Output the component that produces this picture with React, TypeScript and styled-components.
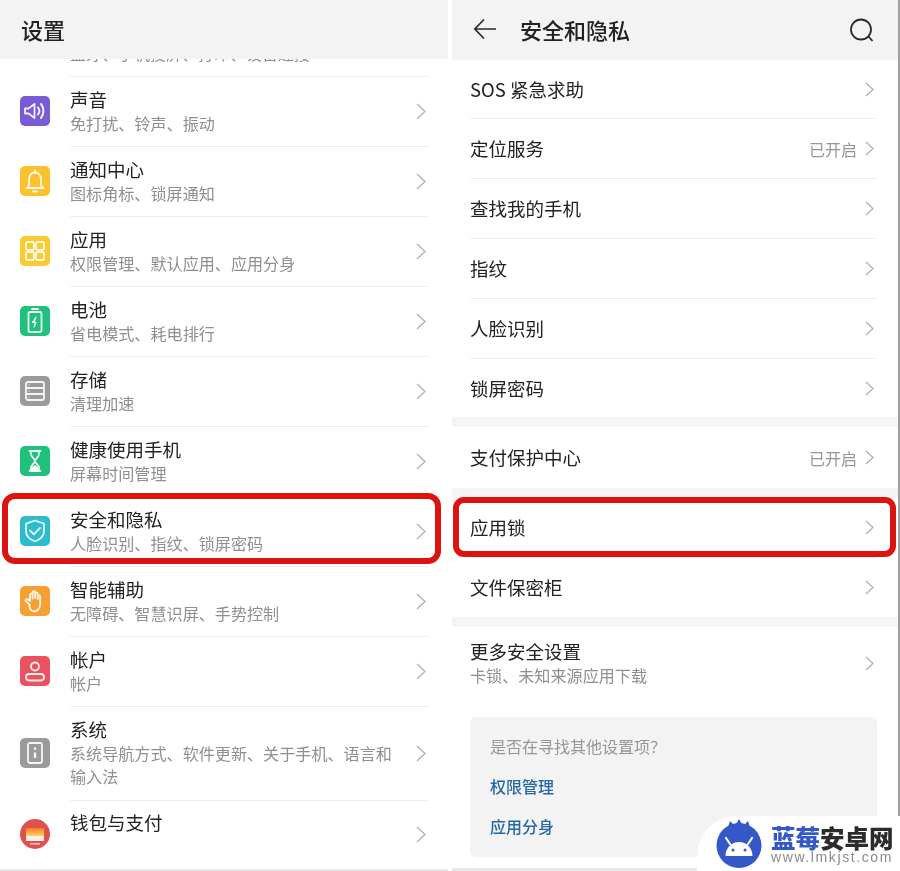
import React from 'react';
import styled, { createGlobalStyle } from 'styled-components';

const GlobalStyle = createGlobalStyle`
  html, body {
    margin: 0;
    background: #fff;
    font-family: "Noto Sans CJK SC", "Liberation Sans", sans-serif;
  }
`;

const Page = styled.div`
  position: relative;
  display: grid;
  grid-template-columns: 448px 1fr;
  column-gap: 4px;
  width: 900px;
  height: 871px;
  overflow: hidden;
  background: #fff;
  filter: blur(0.35px);
`;

const Panel = styled.section<{ $edge?: boolean }>`
  display: flex;
  flex-direction: column;
  height: 871px;
  background: #fff;
  border-right: ${(p) => (p.$edge ? '2px solid #a0a0a0' : 'none')};
`;

const Header = styled.header<{ $height: number }>`
  display: flex;
  align-items: center;
  flex: none;
  box-sizing: border-box;
  height: ${(p) => p.$height}px;
  padding: 0 21px 2px;
  background: #f3f3f3;
  color: #222;
  font-size: 22px;
  font-weight: 500;
  line-height: 30px;
`;

const BackButton = styled.span`
  display: flex;
  margin-right: 24px;
`;

const SearchButton = styled.span`
  display: flex;
  margin-left: auto;
  margin-right: 3px;
`;

const ClippedRow = styled.div`
  display: flex;
  flex-direction: column;
  justify-content: flex-end;
  flex: none;
  height: 17px;
  margin: 0 20px 0 70px;
  overflow: hidden;
  border-bottom: 1px solid #efefef;
`;

const ClippedText = styled.div`
  flex: none;
  padding-bottom: 11px;
  color: #8f8f8f;
  font-size: 16px;
  line-height: 23px;
  white-space: nowrap;
`;

const MenuRow = styled.div<{ $highlight?: boolean }>`
  position: relative;
  display: flex;
  align-items: stretch;
  flex: none;
  padding-left: 20px;
  background: #fff;

  ${(p) =>
    p.$highlight &&
    `
    &::after {
      content: '';
      position: absolute;
      top: -4px;
      left: 2px;
      width: 439px;
      height: 71px;
      box-sizing: border-box;
      border: 6px solid #dc1410;
      border-radius: 13px;
    }
  `}
`;

const IconSlot = styled.div`
  display: flex;
  align-items: center;
  flex: none;
  width: 50px;
  padding-bottom: 2px;
`;

const IconTile = styled.div<{ $color: string; $round?: boolean }>`
  display: flex;
  align-items: center;
  justify-content: center;
  width: 30px;
  height: 30px;
  border-radius: ${(p) => (p.$round ? '50%' : '5px')};
  background: ${(p) => p.$color};
  overflow: hidden;
`;

const MenuBody = styled.div<{ $divider?: boolean; $height?: number }>`
  display: flex;
  align-items: center;
  flex: 1;
  box-sizing: border-box;
  min-height: ${(p) => p.$height ?? 70}px;
  margin-right: 20px;
  border-bottom: ${(p) => (p.$divider ? '1px solid #efefef' : 'none')};
`;

const TextBlock = styled.div<{ $lift?: boolean }>`
  flex: 1;
  min-width: 0;
  padding: 0 14px ${(p) => (p.$lift ? 2 : 0)}px 0;
`;

const Title = styled.div`
  color: #222;
  font-size: 18.5px;
  line-height: 23px;
  white-space: nowrap;
`;

const Sub = styled.div`
  margin-top: 1px;
  color: #8f8f8f;
  font-size: 16.1px;
  line-height: 23px;
`;

const ChevronSlot = styled.span`
  display: flex;
  flex: none;
  margin: 0 2px 1px 0;
`;

const SettingRow = styled.div<{ $divider?: boolean; $highlight?: boolean; $height?: number }>`
  position: relative;
  display: flex;
  align-items: center;
  flex: none;
  box-sizing: border-box;
  height: ${(p) => p.$height ?? 60}px;
  margin: 0 21px 0 18px;
  padding-right: 3px;
  border-bottom: ${(p) => (p.$divider ? '1px solid #efefef' : 'none')};

  ${(p) =>
    p.$highlight &&
    `
    &::after {
      content: '';
      position: absolute;
      top: -1px;
      left: -17px;
      width: 443px;
      height: 60px;
      box-sizing: border-box;
      border: 6px solid #dc1410;
      border-radius: 11px;
    }
  `}
`;

const Value = styled.span`
  margin-right: 8px;
  color: #959595;
  font-size: 16px;
`;

const SectionGap = styled.div`
  flex: none;
  height: 10px;
  background: #f5f5f5;
`;

const HintCard = styled.div`
  display: flex;
  flex-direction: column;
  flex: none;
  box-sizing: border-box;
  height: 140px;
  margin: 18px 21px 0 18px;
  padding: 17px 20px;
  border-radius: 6px;
  background: #f3f3f3;
`;

const HintLabel = styled.div`
  color: #969696;
  font-size: 16px;
  line-height: 24px;
`;

const HintLink = styled.div`
  margin-top: 16px;
  color: #2468a8;
  font-size: 16px;
  font-weight: 500;
  line-height: 24px;
`;

const Spacer = styled.div`
  flex: 1;
`;

const BottomEdge = styled.div`
  flex: none;
  height: 3px;
  background: #e8e8e8;
`;

const Watermark = styled.div`
  position: absolute;
  right: 0;
  bottom: 0;
  display: flex;
  align-items: flex-start;
  width: 203px;
  height: 55px;
  box-sizing: border-box;
  padding: 2px 0 0 19px;
  border-radius: 40px 0 0 0;
  background: #fff;
`;

const WatermarkText = styled.div`
  margin: 7px 0 0 9px;
`;

const WatermarkName = styled.div`
  color: #3558c8;
  font-size: 24.5px;
  font-weight: 900;
  line-height: 25px;
  white-space: nowrap;

  span {
    color: #2b2b2b;
  }
`;

const WatermarkUrl = styled.div`
  color: #8a8a8a;
  font-family: "Liberation Sans", sans-serif;
  font-size: 14px;
  line-height: 14px;
  letter-spacing: 1.6px;
  white-space: nowrap;
`;

const Chevron = ({ small }: { small?: boolean }) =>
  small ? (
    <svg width="9" height="15" viewBox="0 0 9 15" fill="none">
      <path d="M1 1l7 6.500-7 6.500" stroke="#b4b4b4" strokeWidth="1.500" />
    </svg>
  ) : (
    <svg width="10" height="17" viewBox="0 0 10 17" fill="none">
      <path d="M1 1l8 7.500-8 7.500" stroke="#b4b4b4" strokeWidth="1.500" />
    </svg>
  );

const line = {
  fill: 'none',
  stroke: '#fff',
  strokeOpacity: 0.9,
  strokeWidth: 1.8,
  strokeLinecap: 'round',
  strokeLinejoin: 'round',
} as const;

const SpeakerIcon = () => (
  <svg width="26" height="26" viewBox="0 0 26 26" {...line}>
    <path d="M3 10.500v5h3.500l6 4.500V6l-6 4.500z" />
    <path d="M16 9.500c1.600 2 1.600 5 0 7M19 6c3.200 3.800 3.200 10.200 0 14" strokeWidth="2" />
  </svg>
);

const BellIcon = () => (
  <svg width="26" height="26" viewBox="0 0 26 26" {...line}>
    <path d="M4.500 20c1.500-.8 2.500-1.800 2.500-3v-5.500C7 7.500 9.500 4.500 13 4.500s6 3 6 7V17c0 1.200 1 2.200 2.500 3z" />
    <path d="M13 2.500v2M11 23.500h4" />
  </svg>
);

const AppsIcon = () => (
  <svg width="24" height="24" viewBox="0 0 24 24" {...line}>
    <rect x="3" y="3" width="8" height="8" rx="1.800" />
    <rect x="13" y="3" width="8" height="8" rx="1.800" />
    <rect x="3" y="13" width="8" height="8" rx="1.800" />
    <rect x="13" y="13" width="8" height="8" rx="1.800" />
  </svg>
);

const BatteryIcon = () => (
  <svg width="26" height="28" viewBox="0 0 26 28" {...line}>
    <rect x="6.500" y="5" width="13" height="20" rx="1.500" />
    <path d="M10 2h6" />
    <path d="M14 10l-3.500 5.500h3.500L12 20" fill="#fff" strokeWidth="1.200" />
  </svg>
);

const StorageIcon = () => (
  <svg width="24" height="24" viewBox="0 0 24 24" {...line}>
    <rect x="3" y="3" width="18" height="18" rx="2" />
    <path d="M3 9h18M3 15h18" />
    <path d="M6 6h.2M6 12h.2M6 18h.2" strokeWidth="1.200" />
  </svg>
);

const HourglassIcon = () => (
  <svg width="24" height="26" viewBox="0 0 24 26" {...line}>
    <path d="M6.500 3h11M6.500 23h11" />
    <path d="M8 3v3c0 3.500 4 5 4 7s-4 3.500-4 7v3M16 3v3c0 3.500-4 5-4 7s4 3.500 4 7v3" />
    <path d="M8.500 22c.5-2.500 2.500-3.500 3.500-4 1 .5 3 1.500 3.500 4z" fill="#fff" />
  </svg>
);

const ShieldIcon = () => (
  <svg width="26" height="26" viewBox="0 0 26 26" {...line}>
    <path d="M13 2.500l9 3.200V13c0 5-4 8.500-9 10.500C8 21.500 4 18 4 13V5.700z" />
    <path d="M8 12.500l3.800 3.800 6.200-6.300" />
  </svg>
);

const HandIcon = () => (
  <svg width="26" height="26" viewBox="0 0 26 26" {...line}>
    <path d="M8 17l-4-3.500c-1.400-1.400.4-3.200 1.900-2L8 13V7c0-1.700 2.600-1.700 2.600 0v3.500V4.500c0-1.700 2.600-1.700 2.600 0v5.500-4c0-1.700 2.600-1.700 2.600 0v5-2.500c0-1.600 2.400-1.600 2.400 0V16c0 4.500-3 7.500-6 7.500-3 0-4.500-2.500-5-6.500z" />
  </svg>
);

const AccountIcon = () => (
  <svg width="26" height="26" viewBox="0 0 26 26" {...line}>
    <circle cx="13" cy="8.500" r="4" />
    <rect x="4" y="16" width="18" height="6.500" rx="3.200" />
  </svg>
);

const SystemIcon = () => (
  <svg width="24" height="26" viewBox="0 0 24 26" {...line}>
    <rect x="5" y="3" width="14" height="20" rx="2" />
    <path d="M12 8.500v.3" strokeWidth="2.400" />
    <path d="M12 12.500v5.500" strokeWidth="2.400" strokeLinecap="butt" />
  </svg>
);

const WalletIcon = () => (
  <svg width="30" height="30" viewBox="0 0 30 30">
    <defs>
      <linearGradient id="walletCard" x1="0" y1="0" x2="0" y2="1">
        <stop offset="0" stopColor="#f57a38" />
        <stop offset="1" stopColor="#ffd35c" />
      </linearGradient>
    </defs>
    <rect x="6" y="9" width="18" height="8" fill="url(#walletCard)" />
    <rect x="6" y="17" width="18" height="5" fill="#fbeeea" />
    <rect x="10" y="24" width="10" height="1.500" fill="#f6c7c2" />
  </svg>
);

const BackArrow = () => (
  <svg width="23" height="22" viewBox="0 0 23 22" fill="none" stroke="#2a2a2a" strokeWidth="1.700">
    <path d="M23 11H2M11 1.500L1.800 11l9.200 9.500" />
  </svg>
);

const SearchIcon = () => (
  <svg width="26" height="26" viewBox="0 0 26 26" fill="none" stroke="#2a2a2a" strokeWidth="1.800">
    <circle cx="13" cy="13.500" r="10" />
    <path d="M20.500 20.500l4 4.500" />
  </svg>
);

const WatermarkLogo = () => (
  <svg width="46" height="50" viewBox="0 0 46 50">
    <path d="M11 12l3-9 5 5 4-7 4 7 5-5 3 9z" fill="#3558c8" />
    <circle cx="23" cy="27.500" r="22.500" fill="#3558c8" />
    <path d="M9.500 38c0-8 6-14 13.500-14s13.500 6 13.500 14z" fill="#fff" />
    <path d="M14 26l-4-6M32 26l4-6" stroke="#fff" strokeWidth="2.200" strokeLinecap="round" />
    <circle cx="17" cy="32" r="1.500" fill="#3558c8" />
    <circle cx="29" cy="32" r="1.500" fill="#3558c8" />
  </svg>
);

interface MenuEntry {
  title: string;
  sub: string;
  color: string;
  icon: React.ReactNode;
  round?: boolean;
  highlight?: boolean;
  height?: number;
}

const menu: MenuEntry[] = [
  { title: '声音', sub: '免打扰、铃声、振动', color: '#7a5bd6', icon: <SpeakerIcon /> },
  { title: '通知中心', sub: '图标角标、锁屏通知', color: '#fcc22e', icon: <BellIcon /> },
  { title: '应用', sub: '权限管理、默认应用、应用分身', color: '#fcc92f', icon: <AppsIcon /> },
  { title: '电池', sub: '省电模式、耗电排行', color: '#22c07f', icon: <BatteryIcon /> },
  { title: '存储', sub: '清理加速', color: '#9b9b9b', icon: <StorageIcon /> },
  { title: '健康使用手机', sub: '屏幕时间管理', color: '#1fc07c', icon: <HourglassIcon /> },
  { title: '安全和隐私', sub: '人脸识别、指纹、锁屏密码', color: '#2dbccb', icon: <ShieldIcon />, highlight: true },
  { title: '智能辅助', sub: '无障碍、智慧识屏、手势控制', color: '#f5a030', icon: <HandIcon /> },
  { title: '帐户', sub: '帐户', color: '#e9525f', icon: <AccountIcon /> },
  { title: '系统', sub: '系统导航方式、软件更新、关于手机、语言和输入法', color: '#9b9b9b', icon: <SystemIcon />, height: 94 },
  { title: '钱包与支付', sub: '\u00a0', color: '#e0504f', icon: <WalletIcon />, round: true, height: 68 },
];

export default function App() {
  return (
    <>
      <GlobalStyle />
      <Page>
        <Panel>
          <Header $height={59}>设置</Header>
          <ClippedRow>
            <ClippedText>蓝牙、手机投屏、打印、设备连接</ClippedText>
          </ClippedRow>
          {menu.map((item, index) => (
            <MenuRow key={item.title} $highlight={item.highlight}>
              <IconSlot>
                <IconTile $color={item.color} $round={item.round}>
                  {item.icon}
                </IconTile>
              </IconSlot>
              <MenuBody $divider={index < menu.length - 1} $height={item.height}>
                <TextBlock $lift={item.height !== undefined}>
                  <Title>{item.title}</Title>
                  <Sub>{item.sub}</Sub>
                </TextBlock>
                <ChevronSlot>
                  <Chevron />
                </ChevronSlot>
              </MenuBody>
            </MenuRow>
          ))}
          <Spacer />
          <BottomEdge />
        </Panel>

        <Panel $edge>
          <Header $height={60}>
            <BackButton>
              <BackArrow />
            </BackButton>
            安全和隐私
            <SearchButton>
              <SearchIcon />
            </SearchButton>
          </Header>
          <SettingRow $divider $height={59}>
            <TextBlock><Title>SOS 紧急求助</Title></TextBlock>
            <Chevron small />
          </SettingRow>
          <SettingRow $divider>
            <TextBlock><Title>定位服务</Title></TextBlock>
            <Value>已开启</Value>
            <Chevron small />
          </SettingRow>
          <SettingRow $divider>
            <TextBlock><Title>查找我的手机</Title></TextBlock>
            <Chevron small />
          </SettingRow>
          <SettingRow $divider>
            <TextBlock><Title>指纹</Title></TextBlock>
            <Chevron small />
          </SettingRow>
          <SettingRow $divider>
            <TextBlock><Title>人脸识别</Title></TextBlock>
            <Chevron small />
          </SettingRow>
          <SettingRow $height={58}>
            <TextBlock><Title>锁屏密码</Title></TextBlock>
            <Chevron small />
          </SettingRow>
          <SectionGap />
          <SettingRow $height={61}>
            <TextBlock><Title>支付保护中心</Title></TextBlock>
            <Value>已开启</Value>
            <Chevron small />
          </SettingRow>
          <SectionGap />
          <SettingRow $divider $highlight>
            <TextBlock><Title>应用锁</Title></TextBlock>
            <Chevron small />
          </SettingRow>
          <SettingRow $height={59}>
            <TextBlock><Title>文件保密柜</Title></TextBlock>
            <Chevron small />
          </SettingRow>
          <SectionGap />
          <SettingRow $height={72}>
            <TextBlock>
              <Title>更多安全设置</Title>
              <Sub>卡锁、未知来源应用下载</Sub>
            </TextBlock>
            <Chevron small />
          </SettingRow>
          <HintCard>
            <HintLabel>是否在寻找其他设置项？</HintLabel>
            <HintLink>权限管理</HintLink>
            <HintLink>应用分身</HintLink>
          </HintCard>
          <Spacer />
          <BottomEdge />
        </Panel>

        <Watermark>
          <WatermarkLogo />
          <WatermarkText>
            <WatermarkName>蓝莓<span>安卓网</span></WatermarkName>
            <WatermarkUrl>www.lmkjst.com</WatermarkUrl>
          </WatermarkText>
        </Watermark>
      </Page>
    </>
  );
}
